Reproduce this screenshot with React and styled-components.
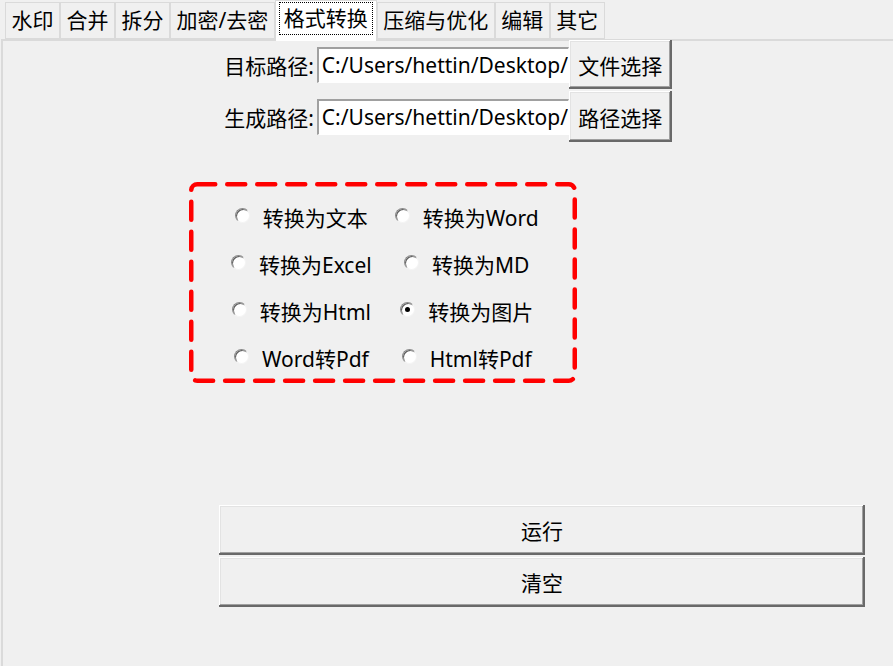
import React from "react";
import styled, { createGlobalStyle } from "styled-components";

const GlobalStyle = createGlobalStyle`
  html, body {
    margin: 0;
    padding: 0;
    background: #f0f0f0;
  }
  body {
    font-family: "Noto Sans", "Noto Sans CJK SC", sans-serif;
    font-size: 21px;
    color: #000;
  }
`;

const tabs = ["水印", "合并", "拆分", "加密/去密", "格式转换", "压缩与优化", "编辑", "其它"];
const options = [
  { label: "转换为文本" },
  { label: "转换为Word" },
  { label: "转换为Excel" },
  { label: "转换为MD" },
  { label: "转换为Html" },
  { label: "转换为图片", checked: true },
  { label: "Word转Pdf" },
  { label: "Html转Pdf" },
];

export default function App() {
  return (
    <Window>
      <GlobalStyle />
      <TabBar>
        {tabs.map((t) =>
          t === "格式转换" ? (
            <Tab key={t} active>
              <FocusRing>{t}</FocusRing>
            </Tab>
          ) : (
            <Tab key={t}>{t}</Tab>
          )
        )}
      </TabBar>

      <Pane>
        <PathGrid>
          <Label>目标路径:</Label>
          <Entry>C:/Users/hettin/Desktop/demo.pdf</Entry>
          <RaisedButton>文件选择</RaisedButton>
          <Label>生成路径:</Label>
          <Entry>C:/Users/hettin/Desktop/output</Entry>
          <RaisedButton tall>路径选择</RaisedButton>
        </PathGrid>

        <RadioFrame>
          {/* red hand-drawn marker round the option group */}
          <Marker viewBox="0 0 388 201" width="388" height="201">
            <rect
              x="2.25"
              y="2.25"
              width="383.5"
              height="196.5"
              rx="6"
              fill="none"
              stroke="#ff0000"
              strokeWidth="4.5"
              strokeDasharray="18 12"
              strokeLinecap="round"
            />
          </Marker>
          {options.map((o) => (
            <RadioItem key={o.label}>
              <RadioDot checked={o.checked} />
              <span>{o.label}</span>
            </RadioItem>
          ))}
        </RadioFrame>

        <Actions>
          <WideButton>运行</WideButton>
          <WideButton>清空</WideButton>
        </Actions>
      </Pane>
    </Window>
  );
}

const Window = styled.div`
  width: 893px;
  height: 666px;
  overflow: hidden;
  background: #f0f0f0;
`;

const TabBar = styled.div`
  display: flex;
  align-items: flex-end;
  height: 39px;
  padding-left: 5px;
`;

const Tab = styled.div`
  position: relative;
  z-index: ${(p) => (p.active ? 1 : 0)};
  display: flex;
  align-items: ${(p) => (p.active ? "flex-start" : "center")};
  justify-content: center;
  box-sizing: border-box;
  height: ${(p) => (p.active ? "41px" : "37px")};
  margin-bottom: ${(p) => (p.active ? "-2px" : "0")};
  padding: ${(p) => (p.active ? "2px 4px 0" : "0 5.5px")};
  border: 1px solid #dadada;
  border-bottom: ${(p) => (p.active ? "none" : "1px solid #dadada")};
  background: ${(p) => (p.active ? "#ffffff" : "#f0f0f0")};
  white-space: nowrap;
  line-height: 1;
`;

const FocusRing = styled.span`
  display: flex;
  align-items: center;
  height: 31px;
  padding: 0 4px;
  outline: 1px dotted #000;
`;

const Pane = styled.div`
  box-sizing: border-box;
  height: 627px;
  margin-left: 1px;
  border-top: 2px solid #dadada;
  border-left: 2px solid #dadada;
`;

const PathGrid = styled.div`
  display: grid;
  grid-template-columns: auto 252px 103px;
  justify-content: center;
  align-items: center;
  row-gap: 2px;
  margin-top: -1px;
`;

const Label = styled.div`
  padding-right: 3px;
  text-align: right;
  white-space: nowrap;
`;

const Entry = styled.div`
  box-sizing: border-box;
  height: 36px;
  padding: 0 3px;
  display: flex;
  align-items: center;
  overflow: hidden;
  white-space: nowrap;
  background: #fff;
  border-top: 2px solid #a0a0a0;
  border-left: 2px solid #a0a0a0;
  border-right: 1px solid #fff;
  border-bottom: 1px solid #fff;
`;

const RaisedButton = styled.div`
  box-sizing: border-box;
  height: ${(p) => (p.tall ? "51px" : "49px")};
  display: flex;
  align-items: center;
  justify-content: center;
  background: #f0f0f0;
  box-shadow: inset -2px -2px #696969, inset 1px 1px #fff, inset -3px -3px #a0a0a0,
    inset 2px 2px #e3e3e3;
  white-space: nowrap;
`;

const RadioFrame = styled.div`
  position: relative;
  box-sizing: border-box;
  width: 388px;
  height: 201px;
  margin: 40px 0 0 186px;
  padding: 11px 0 0 42px;
  display: grid;
  grid-template-columns: auto auto;
  grid-auto-rows: 47px;
  column-gap: 23px;
  justify-content: start;
  justify-items: center;
  align-items: center;
`;

const Marker = styled.svg`
  position: absolute;
  left: 0;
  top: 0;
  pointer-events: none;
`;

const RadioItem = styled.label`
  display: flex;
  align-items: center;
  gap: 13px;
  white-space: nowrap;
`;

const RadioDot = styled.span`
  position: relative;
  box-sizing: border-box;
  width: 15px;
  height: 15px;
  border-radius: 50%;
  background: #fff;
  border: 1px solid;
  border-color: #8a8a8a #f4f4f4 #f4f4f4 #8a8a8a;
  box-shadow: inset 1px 1px #5f5f5f;
  margin-top: -2px;

  &::after {
    content: "";
    display: ${(p) => (p.checked ? "block" : "none")};
    position: absolute;
    left: 4px;
    top: 4px;
    width: 5px;
    height: 5px;
    border-radius: 50%;
    background: #000;
  }
`;

const Actions = styled.div`
  display: flex;
  flex-direction: column;
  gap: 2px;
  width: 646px;
  margin: 122px 0 0 216px;
`;

const WideButton = styled.div`
  box-sizing: border-box;
  height: 50px;
  display: flex;
  align-items: center;
  justify-content: center;
  background: #f0f0f0;
  box-shadow: inset -2px -2px #696969, inset 1px 1px #fff, inset -3px -3px #a0a0a0,
    inset 2px 2px #e3e3e3;
`;
